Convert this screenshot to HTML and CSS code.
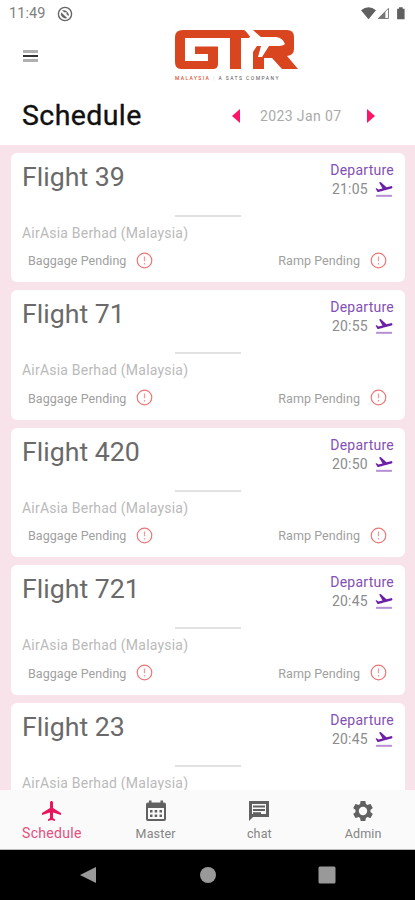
FILE: index.html
```html
<!DOCTYPE html>
<html lang="en">
<head>
<meta charset="utf-8">
<title>Schedule</title>
<link rel="stylesheet" href="styles.css">
</head>
<body>
<svg class="defs" aria-hidden="true">
  <symbol id="takeoff" viewBox="0 0 24 24"><path opacity=".5" d="M2.5 19h19v2.4h-19z"/><path d="M22.07 9.64c-.21-.8-1.04-1.28-1.84-1.06L14.92 10l-6.9-6.43-1.93.51 4.14 7.17-4.97 1.33-1.97-1.54-1.45.39 2.59 4.49s7.12-1.9 16.57-4.43c.81-.23 1.28-1.05 1.07-1.85z"/></symbol>
  <symbol id="alert" viewBox="0 0 24 24"><circle cx="12" cy="12" r="9.2" fill="none" stroke="#ec7777" stroke-width="1.5"/><path opacity=".75" d="M11.200 15h1.600v2h-1.600zm0-8h1.600v6h-1.600z"/></symbol>
</svg>
<div class="phone">
  <div class="status">
    <span class="clock">11:49</span>
    <svg class="dnd" viewBox="0 0 16 16"><circle cx="8" cy="8" r="6.6" fill="none" stroke="#666" stroke-width="1.4"/><path d="M5 4.500A5 5 0 0 1 11.600 10.200L9.500 8.200V6.300H7.300zM4 6.200L10.200 12A4.700 4.700 0 0 1 4 6.200M5.700 9.500h2" fill="#666"/></svg>
    <svg class="signals" viewBox="0 0 48 16"><path d="M0 4.4Q8 -1.6 16 4.4L8 14z" fill="#606060"/><path d="M29.3 2.5V13.3H18.5z" fill="none" stroke="#777" stroke-width="1"/><path d="M26 5.5V13.5H18z" fill="#777"/><path d="M38.5 3h2V1.3h4V3h2v11h-8z" fill="#606060"/></svg>
  </div>
  <header class="brand">
    <span class="menu"><i></i><i></i><i></i></span>
    <div class="logo">
      <svg viewBox="0 0 123 42"><g fill="#d9451f"><path d="M8 0H70L76 8H66V39H55V8H10V31H33V24H20V16.500H43V34Q43 39 38 39H6Q0 39 0 32V7Q0 0 8 0Z"/><path d="M78 0H112Q119 0 119 7V19Q119 25 112 26L123 39H107L97 28H89V39H78V22L87 8Z"/></g><path fill="#fff" d="M69 0H77L83 7H101Q108 8 110 14Q108 16 102 16H94L87 27H83L86 16H80L77 20H75L77 12L74 7H79Z"/></svg>
      <p><b>MALAYSIA</b><i>|</i><span>A SATS COMPANY</span></p>
    </div>
  </header>
  <div class="heading">
    <h1>Schedule</h1>
    <div class="date">
      <svg viewBox="0 0 8 14"><path d="M8 0v14L0 7z"/></svg>
      <span>2023 Jan 07</span>
      <svg viewBox="0 0 8 14"><path d="M0 0v14l8-7z"/></svg>
    </div>
  </div>
  <main class="list">
    <article class="card">
      <div class="top"><h2>Flight 39</h2><div class="dep"><span>Departure</span><div>21:05<svg><use href="#takeoff"/></svg></div></div></div>
      <hr><p class="airline">AirAsia Berhad (Malaysia)</p>
      <div class="tasks"><span>Baggage Pending<svg><use href="#alert"/></svg></span><span>Ramp Pending<svg><use href="#alert"/></svg></span></div>
    </article>
    <article class="card">
      <div class="top"><h2>Flight 71</h2><div class="dep"><span>Departure</span><div>20:55<svg><use href="#takeoff"/></svg></div></div></div>
      <hr><p class="airline">AirAsia Berhad (Malaysia)</p>
      <div class="tasks"><span>Baggage Pending<svg><use href="#alert"/></svg></span><span>Ramp Pending<svg><use href="#alert"/></svg></span></div>
    </article>
    <article class="card">
      <div class="top"><h2>Flight 420</h2><div class="dep"><span>Departure</span><div>20:50<svg><use href="#takeoff"/></svg></div></div></div>
      <hr><p class="airline">AirAsia Berhad (Malaysia)</p>
      <div class="tasks"><span>Baggage Pending<svg><use href="#alert"/></svg></span><span>Ramp Pending<svg><use href="#alert"/></svg></span></div>
    </article>
    <article class="card">
      <div class="top"><h2>Flight 721</h2><div class="dep"><span>Departure</span><div>20:45<svg><use href="#takeoff"/></svg></div></div></div>
      <hr><p class="airline">AirAsia Berhad (Malaysia)</p>
      <div class="tasks"><span>Baggage Pending<svg><use href="#alert"/></svg></span><span>Ramp Pending<svg><use href="#alert"/></svg></span></div>
    </article>
    <article class="card">
      <div class="top"><h2>Flight 23</h2><div class="dep"><span>Departure</span><div>20:45<svg><use href="#takeoff"/></svg></div></div></div>
      <hr><p class="airline">AirAsia Berhad (Malaysia)</p>
    </article>
  </main>
  <nav class="tabs">
    <a class="active"><svg viewBox="0 0 24 24"><path d="M21 16v-2l-8-5V3.500c0-.83-.67-1.500-1.500-1.500S10 2.670 10 3.500V9l-8 5v2l8-2.500V19l-2 1.500V22l3.500-1 3.500 1v-1.500L13 19v-5.500l8 2.500z"/></svg>Schedule</a>
    <a><svg viewBox="0 0 24 24"><path fill-rule="evenodd" d="M19 3.500h1a2 2 0 0 1 2 2V20a2 2 0 0 1-2 2H4a2 2 0 0 1-2-2V5.500a2 2 0 0 1 2-2h1V1.500h2.500v2h9v-2H19zM4 9v11h16V9zM6 11h2.500v2.500H6zm4.700 0h2.500v2.500h-2.500zm4.800 0H18v2.500h-2.500zM6 15.500h2.500V18H6zm4.700 0h2.500V18h-2.500zm4.800 0H18V18h-2.500z"/></svg>Master</a>
    <a><svg viewBox="0 0 24 24"><path fill-rule="evenodd" d="M22 2H2v20l4-4h16zM5 5h14v10H5zM6 6.500h12v2H6zm0 3.500h12v2H6zm0 3.300h8v1.700H6z"/></svg>chat</a>
    <a><svg viewBox="0 0 24 24"><path d="M19.430 12.980c.04-.32.070-.64.070-.98s-.03-.66-.07-.98l2.110-1.650c.19-.15.240-.42.120-.64l-2-3.460c-.12-.22-.39-.3-.61-.22l-2.490 1c-.52-.4-1.080-.73-1.690-.98l-.38-2.650C14.460 2.180 14.250 2 14 2h-4c-.25 0-.46.180-.49.420l-.38 2.650c-.61.250-1.170.590-1.690.980l-2.490-1c-.23-.09-.49 0-.61.220l-2 3.460c-.13.220-.07.490.120.640l2.110 1.650c-.04.320-.07.650-.07.980s.03.660.070.980l-2.110 1.650c-.19.150-.24.420-.12.640l2 3.460c.12.220.390.300.610.220l2.490-1c.52.400 1.080.730 1.690.980l.38 2.650c.03.240.240.420.490.420h4c.25 0 .46-.18.490-.42l.38-2.650c.61-.25 1.170-.59 1.690-.98l2.490 1c.23.090.490 0 .61-.22l2-3.460c.12-.22.070-.49-.12-.64zM12 16.200a4.200 4.200 0 1 1 0-8.400 4.200 4.200 0 0 1 0 8.400z"/></svg>Admin</a>
  </nav>
  <div class="system">
    <svg viewBox="0 0 18 18"><path d="M17 1v16L1 9z"/></svg>
    <svg viewBox="0 0 18 18"><circle cx="9" cy="9" r="8"/></svg>
    <svg viewBox="0 0 18 18"><rect x=".5" y=".5" width="17" height="17" rx="1.500"/></svg>
  </div>
</div>
</body>
</html>
```
FILE: styles.css
```css
* { box-sizing: border-box; }
body { margin: 0; font-family: Roboto, sans-serif; background: #fff; overflow: hidden; }
h1, h2, p { margin: 0; font-weight: 400; }
svg { display: block; flex: none; }
.defs { display: none; }
.phone { width: 415px; height: 900px; display: flex; flex-direction: column; }
.status { height: 28px; flex: none; display: flex; align-items: center; padding: 0 8px 1px 9px; color: #808080; }
.clock { font-size: 14.5px; letter-spacing: .1px; width: 48px; }
.dnd { width: 16px; height: 16px; }
.signals { width: 47px; height: 15px; margin-left: auto; }
.brand { height: 58px; flex: none; display: flex; padding-left: 23px; }
.menu { width: 152px; padding-top: 22px; }
.menu i { display: block; width: 15px; height: 3px; margin-bottom: 2px; background: #b0b0b0; }
.menu i:nth-child(2) { height: 2px; background: #333; }
.logo { padding-top: 2px; }
.logo svg { width: 123px; height: 42px; }
.logo p { display: flex; font-size: 5px; line-height: 6px; color: #555; margin-top: 3px; white-space: nowrap; }
.logo b { color: #dc5636; letter-spacing: 1.350px; font-weight: 500; }
.logo i { margin: 0 4px 0 3px; color: #ccc; font-style: normal; }
.logo span { letter-spacing: 1.450px; }
.heading { height: 59px; flex: none; display: flex; align-items: center; padding: 0 40px 0 22px; justify-content: space-between; }
h1 { font-size: 28.500px; letter-spacing: .4px; color: #111; -webkit-text-stroke: .35px #111; }
.date { display: flex; align-items: center; font-size: 14px; color: #aaa; letter-spacing: .38px; }
.date svg { width: 8px; height: 14px; fill: #fc1569; }
.date span { width: 81px; margin: 0 26px 0 20px; white-space: nowrap; }
.list { flex: 1; min-height: 0; overflow: hidden; background: #f9e3ea; padding: 7.500px 10px 0 11px; display: flex; flex-direction: column; gap: 8px; }
.card { height: 129.600px; flex: none; background: #fff; border-radius: 6px; padding: 8px 11px 0; }
.top { display: flex; justify-content: space-between; height: 54px; }
h2 { font-size: 26.700px; line-height: 33px; color: #6a6a6a; }
.dep { text-align: right; font-size: 14px; line-height: 18px; color: #8450b3; letter-spacing: .25px; }
.dep div { display: flex; align-items: center; justify-content: flex-end; gap: 6px; height: 20px; color: #8c8c8c; }
.dep svg { width: 20px; height: 20px; fill: #6d1fa5; }
hr { width: 66px; height: 2px; margin: 0 auto; border: 0; background: #e2e2e2; }
.airline { font-size: 14px; line-height: 18px; letter-spacing: .21px; color: #bababa; margin-top: 7px; }
.tasks { display: flex; justify-content: space-between; padding: 0 6px; margin-top: 10px; font-size: 12.500px; color: #a0a0a0; letter-spacing: .06px; }
.tasks span { display: flex; align-items: center; gap: 9px; height: 18px; }
.tasks svg { width: 19px; height: 19px; margin-top: -1px; fill: #ec7777; }
.tabs { height: 60px; flex: none; background: #fafafa; display: grid; grid-template-columns: repeat(4, 1fr); border-bottom: 1px solid #bbb; }
.tabs a { display: flex; flex-direction: column; align-items: center; padding-top: 9px; font-size: 12.500px; letter-spacing: .15px; line-height: 18px; gap: 2px; color: #858585; }
.tabs svg { width: 24px; height: 24px; fill: #616161; }
.tabs .active { font-size: 14px; letter-spacing: .3px; color: #e54e7e; gap: 1px; }
.tabs .active svg { fill: #e8145c; }
.system { height: 50px; flex: none; background: #000; display: flex; justify-content: center; align-items: center; gap: 101.500px; }
.system svg { width: 18px; height: 18px; fill: #999; }
```
